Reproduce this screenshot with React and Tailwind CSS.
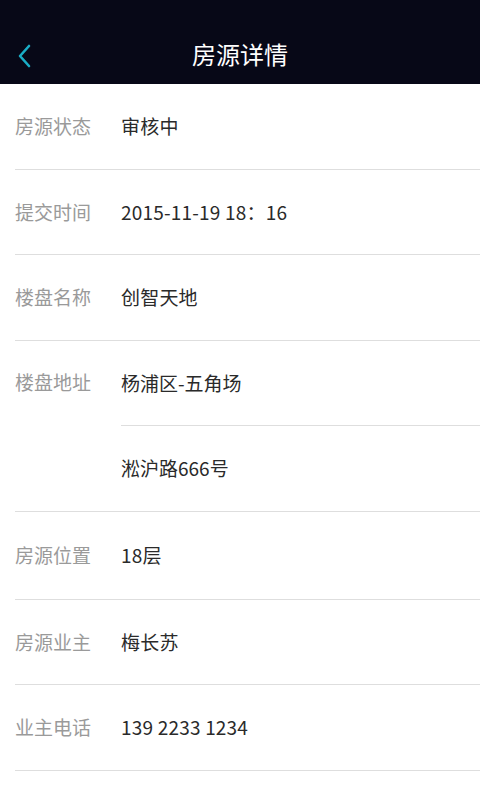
const rows = [
  { label: "房源状态", value: "审核中", h: "h-[86px]" },
  { label: "提交时间", value: "2015-11-19 18：16", h: "h-[85px]" },
  { label: "楼盘名称", value: "创智天地", h: "h-[86px]" },
];

const rowsAfter = [
  { label: "房源位置", value: "18层", h: "h-[88px]" },
  { label: "房源业主", value: "梅长苏", h: "h-[85px]" },
  { label: "业主电话", value: "139 2233 1234", h: "h-[86px]" },
];

const Row = ({ label, value, h }) => (
  <div className={`flex items-center ${h} border-b border-[#dedede] ml-[15px]`}>
    <span className="w-[106px] text-[#9a9a9a]">{label}</span>
    <span className="text-[#2a2a2a] tracking-[0.2px]">{value}</span>
  </div>
);

export default function App() {
  return (
    <div
      className="w-[480px] h-[800px] bg-white text-[19px] overflow-hidden"
      style={{ fontFamily: '"Noto Sans CJK SC", "Noto Sans", sans-serif' }}
    >
      <header className="relative h-[84px] bg-[#070817] flex items-center justify-center pt-[24px]">
        <button className="absolute left-[16px] top-[43px] text-[#1aadc6]">
          <svg width="16" height="26" viewBox="0 0 16 26" fill="none">
            <path d="M13 3L4 13l9 10" stroke="currentColor" strokeWidth="2.6" strokeLinecap="round" strokeLinejoin="round" />
          </svg>
        </button>
        <h1 className="text-white text-[24px]">房源详情</h1>
      </header>
      <div>
        {rows.map((r) => (
          <Row key={r.label} {...r} />
        ))}
        <div className="ml-[15px] border-b border-[#dedede] flex">
          <span className="w-[106px] pt-[27px] text-[#9a9a9a]">楼盘地址</span>
          <div className="flex-1">
            <div className="h-[85px] flex items-center border-b border-[#dedede] text-[#2a2a2a]">杨浦区-五角场</div>
            <div className="h-[85px] flex items-center text-[#2a2a2a]">淞沪路666号</div>
          </div>
        </div>
        {rowsAfter.map((r) => (
          <Row key={r.label} {...r} />
        ))}
      </div>
    </div>
  );
}
